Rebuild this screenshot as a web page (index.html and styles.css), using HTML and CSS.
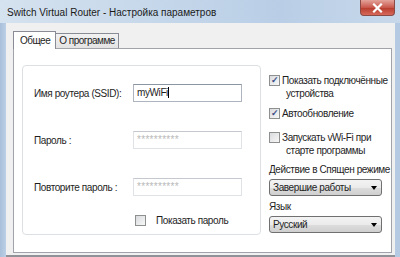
FILE: index.html
```html
<!DOCTYPE html>
<html lang="ru">
<head>
    <meta charset="UTF-8">
    <title>Switch Virtual Router - Настройка параметров</title>
    <link rel="stylesheet" href="styles.css">
</head>
<body>
    <div class="window">
        <div class="titlebar">
            <span class="title">Switch Virtual Router - Настройка параметров</span>
            <span class="close">
                <svg width="13" height="10" viewBox="0 0 13 10">
                    <path d="M3 1.5 L10 8.5 M10 1.5 L3 8.5" stroke="#fff" stroke-width="2.2" stroke-linecap="square"/>
                </svg>
            </span>
        </div>

        <div class="client">
            <div class="tabs">
                <div class="tab active">Общее</div>
                <div class="tab">О программе</div>
            </div>

            <div class="panel">
                <div class="group">
                    <div class="row">
                        <label>Имя роутера (SSID):</label>
                        <div class="input main">myWiFi<span class="caret"></span></div>
                    </div>
                    <div class="row">
                        <label>Пароль :</label>
                        <div class="input dim">**********</div>
                    </div>
                    <div class="row">
                        <label>Повторите пароль :</label>
                        <div class="input dim">**********</div>
                    </div>
                    <div class="check-row">
                        <span class="box"></span>
                        <span>Показать пароль</span>
                    </div>
                </div>

                <div class="options">
                    <div class="opt">
                        <span class="box checked">✓</span>
                        <span class="opt-text">Показать подключённые<br><span class="indent">устройства</span></span>
                    </div>
                    <div class="opt wide">
                        <span class="box checked">✓</span>
                        <span class="opt-text">Автообновление</span>
                    </div>
                    <div class="opt tight">
                        <span class="box"></span>
                        <span class="opt-text">Запускать vWi-Fi при<br><span class="indent">старте программы</span></span>
                    </div>

                    <div class="caption">Действие в Спящен режиме</div>
                    <div class="select">Завершие работы<span class="arrow"></span></div>

                    <div class="caption short">Язык</div>
                    <div class="select">Русский<span class="arrow"></span></div>
                </div>
            </div>
        </div>
    </div>
</body>
</html>
```

FILE: styles.css
```css
body {
    margin: 0;
    font-family: "Liberation Sans", Arial, sans-serif;
    font-size: 10px;
    letter-spacing: -0.4px;
    color: #1e1e1e;
    white-space: nowrap;
}
.window {
    width: 400px;
    height: 257px;
    background: linear-gradient(to right, #a9c0da 0px, #bcd0e6 6px, #c8d8ea 60%, #b4c9e2 100%);
    display: flex;
    flex-direction: column;
    overflow: hidden;
}
.titlebar {
    height: 23px;
    display: flex;
    align-items: flex-start;
    justify-content: space-between;
    background: linear-gradient(to right, #d5e2ef 0%, #c5d7ea 40%, #b9cee6 70%, #c7d8ea 100%);
}
.title {
    padding: 7px 0 0 7px;
    font-size: 10px;
    letter-spacing: 0;
    color: #1a1a1a;
}
.close {
    width: 35px;
    height: 16px;
    margin-right: 5px;
    border: 1px solid #8a4a45;
    border-top: none;
    border-radius: 0 0 4px 4px;
    background: linear-gradient(#e3a39a, #c9584c 50%, #b63b2c 51%, #d7695a);
    display: flex;
    align-items: center;
    justify-content: center;
    box-sizing: border-box;
}
.client {
    flex: 1;
    margin: 0 5px 0 6px;
    background: #f0f0f0;
    padding: 8px 3px 2px 7px;
    display: flex;
    flex-direction: column;
    border-bottom: 2px solid #8f9296;
}
.tabs {
    display: flex;
    align-items: flex-end;
    height: 17px;
    position: relative;
    z-index: 1;
}
.tab {
    height: 14px;
    padding: 0 3px;
    border: 1px solid #898c95;
    border-bottom: none;
    background: linear-gradient(#f2f2f2, #e3e3e3);
    line-height: 14px;
    margin-left: -1px;
    letter-spacing: -0.5px;
}
.tab.active {
    height: 17px;
    margin-left: 0;
    padding: 0 5px 0 6px;
    background: #fff;
    line-height: 17px;
    margin-bottom: -1px;
    border-right: 1px solid #898c95;
}
.panel {
    flex: 1;
    background: #fff;
    border: 1px solid #a0a3aa;
    display: flex;
    padding: 16px 0 0 8px;
}
.group {
    width: 239px;
    height: 170px;
    flex: none;
    box-sizing: border-box;
    border: 1px solid #dcdfe3;
    border-radius: 4px;
    padding: 18px 0 0 11px;
}
.row {
    display: flex;
    align-items: center;
    height: 18px;
    margin-bottom: 29px;
}
.row label {
    width: 99px;
}
.input {
    width: 109px;
    height: 18px;
    box-sizing: border-box;
    border: 1px solid #dfe3e8;
    border-top-color: #c5c9cf;
    padding: 0 0 0 3px;
    line-height: 16px;
}
.input.main {
    border-color: #aeb5bf;
    border-top-color: #8c96a2;
}
.input.dim {
    color: #b9b9b9;
    font-size: 10px;
    letter-spacing: 0.3px;
}
.caret {
    display: inline-block;
    width: 1px;
    height: 11px;
    background: #000;
    vertical-align: -2px;
}
.check-row {
    display: flex;
    align-items: center;
    margin: -10px 0 0 101px;
    gap: 10px;
}
.box {
    width: 9px;
    height: 9px;
    border: 1px solid #8e8f8f;
    background: linear-gradient(135deg, #d9dbde, #f7f7f7);
    flex: none;
    font-size: 9px;
    line-height: 9px;
    text-align: center;
    color: #3a4f87;
    font-weight: bold;
    letter-spacing: 0;
}
.options {
    margin-left: 8px;
    padding-top: 9px;
}
.opt {
    display: flex;
    align-items: flex-start;
    gap: 2px;
    margin-bottom: 7px;
}
.opt.wide {
    margin-bottom: 11px;
}
.opt.tight {
    margin-bottom: 5px;
}
.opt .box {
    margin-top: 1px;
}
.opt-text {
    line-height: 13px;
}
.indent {
    padding-left: 4px;
}
.caption {
    margin-top: 6px;
    line-height: 13px;
}
.caption.short {
    margin-top: 4px;
}
.select {
    width: 113px;
    height: 17px;
    box-sizing: border-box;
    margin-top: 3px;
    border: 1px solid #707070;
    border-radius: 3px;
    background: linear-gradient(#f3f3f3, #ebebeb 50%, #dddddd 51%, #cfcfcf);
    line-height: 15px;
    padding-left: 3px;
    position: relative;
}
.arrow {
    position: absolute;
    right: 4px;
    top: 6px;
    border-left: 3.5px solid transparent;
    border-right: 3.5px solid transparent;
    border-top: 4px solid #000;
}
```
